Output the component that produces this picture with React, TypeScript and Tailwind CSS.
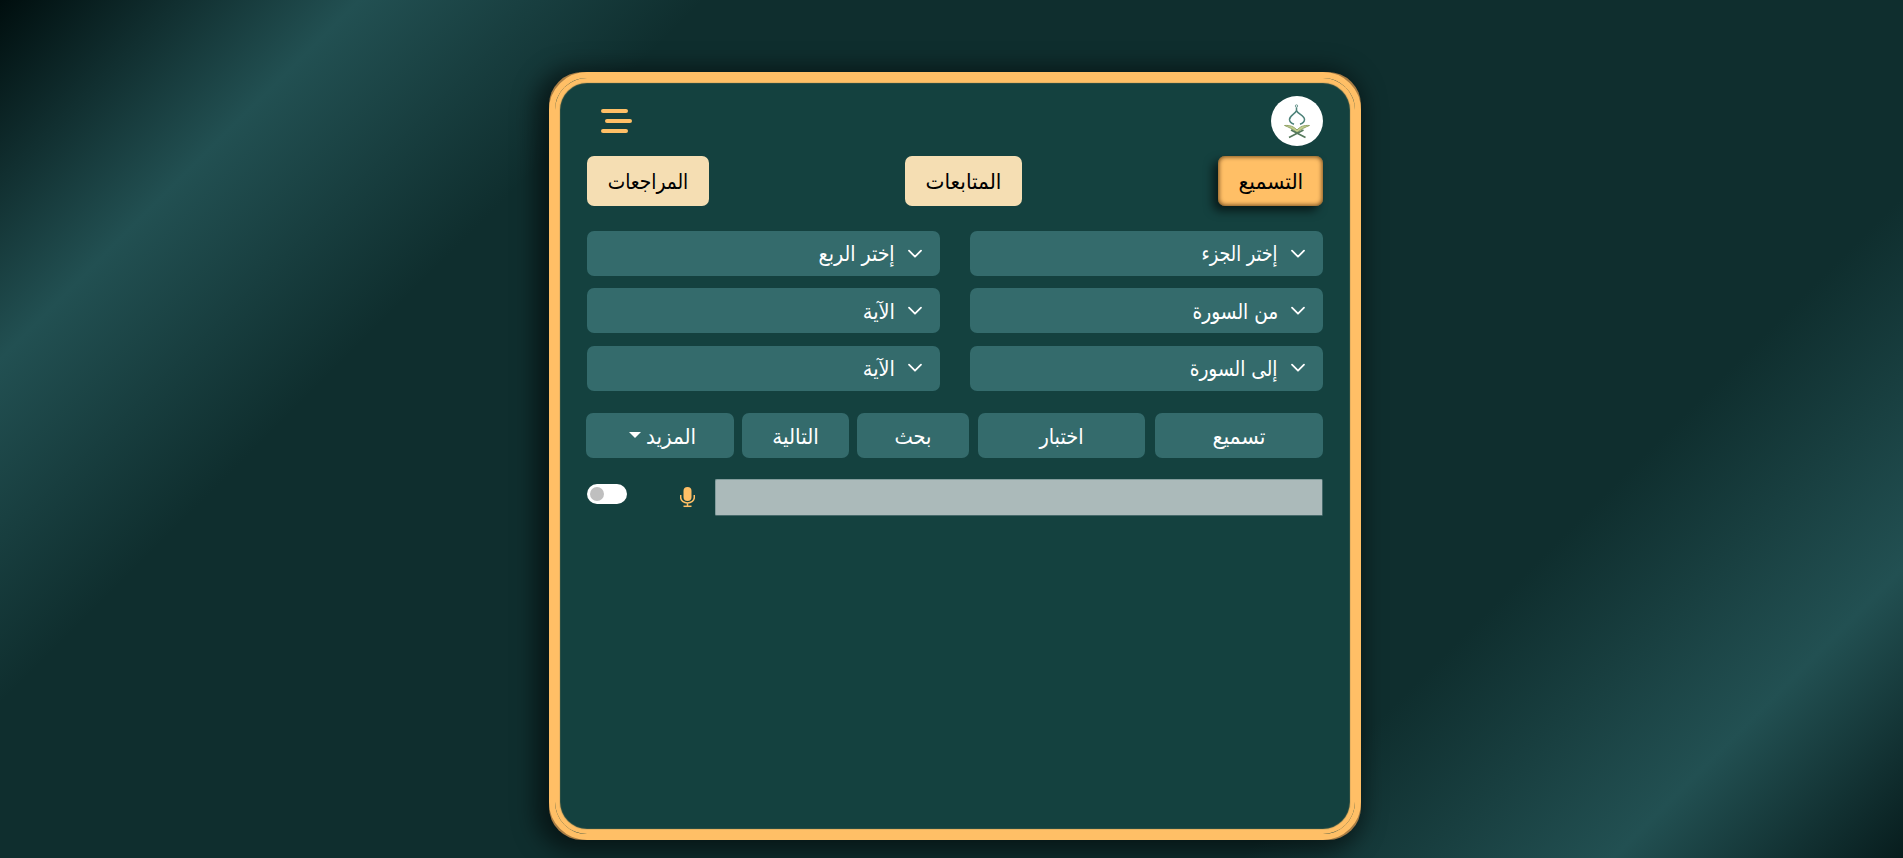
import React from "react";

function Chevron() {
  return (
    <svg width="16" height="16" viewBox="0 0 16 16" fill="none" stroke="#fff" strokeWidth="1.8" strokeLinecap="round" strokeLinejoin="round" className="shrink-0">
      <path d="m2 4.700 6 6 6-6" />
    </svg>
  );
}

function Select({ label, className = "" }: { label: string; className?: string }) {
  return (
    <div className="flex h-[45px] items-center gap-3 rounded-[7px] bg-[#346b6c] pr-[17px] text-white">
      <Chevron />
      <span className={"origin-right " + className}>{label}</span>
    </div>
  );
}

function Action({ className, children }: { className: string; children: React.ReactNode }) {
  return (
    <button className={"flex h-[45px] shrink-0 items-center justify-center rounded-[7px] bg-[#346b6c] pt-1 text-white " + className}>
      {children}
    </button>
  );
}

function Logo() {
  return (
    <div className="flex h-[50px] w-[52px] items-center justify-center rounded-[50%] bg-white">
      <svg width="52" height="50" viewBox="0 0 52 50" fill="none">
        <circle cx="25.500" cy="10" r="1.200" stroke="#6f9a92" strokeWidth="1" />
        <path d="M25.500 11.500v3c-1 3.500-7 5-7 9 0 2.300 1.500 3.700 4.500 4.800M25.500 14.500c1 3.500 8 5 8 9 0 2.300-1.500 3.700-4.500 4.800" stroke="#4d8279" strokeWidth="1.500" />
        <path d="M13.500 29.500c5-.5 9.500 1 12.500 4.500 3-3.500 7-5 12.500-4.500-4 1.500-8 3.500-12.500 7-4.500-3.500-8.500-5.500-12.500-7z" fill="#c3cf8d" stroke="#8a9c5e" strokeWidth=".9" />
        <path d="M18 41.500 32.500 34M34.500 41.500 20 34" stroke="#54785a" strokeWidth="1.600" />
      </svg>
    </div>
  );
}

export default function App() {
  return (
    <div dir="rtl" className="flex h-[858px] w-full justify-center overflow-hidden bg-[linear-gradient(135deg,#000e0e_0%,#225052_13%,#0f2e2e_25.5%,#0f2e2e_76%,#225052_89.5%,#000e0e_103%)] pt-[72px] font-['DejaVu_Sans_Condensed','DejaVu_Sans',sans-serif] text-[21.5px] leading-[30px] [font-stretch:condensed]">
      <div className="ml-[7px] h-[768px] w-[812px] rounded-[33px] bg-[#a97d45] shadow-[-6px_4px_22px_8px_rgba(0,0,0,0.5)]">
        <main className="h-full rounded-[38px] border-[6px] border-[#ffbf66] bg-[#14413f] px-8 pt-[18px] shadow-[inset_0_0_1px_5px_#ffbf66]">
          <header className="flex h-[50px] justify-between">
            <Logo />
            <div className="flex w-[45px] flex-col items-end gap-[6px] pt-[13px]" dir="ltr">
              <i className="mr-1 h-1 w-[27px] rounded-full bg-[#ffbf66]" />
              <i className="h-1 w-[27px] rounded-full bg-[#ffbf66]" />
              <i className="mr-1 h-1 w-[27px] rounded-full bg-[#ffbf66]" />
            </div>
          </header>
          <nav className="mt-[10px] flex h-[50px] justify-between text-black">
            <button className="w-[105px] rounded-[7px] bg-[#ffbf66] pt-0.5 shadow-[inset_0_0_4px_1px_rgba(60,30,0,0.7),-5px_5px_10px_rgba(0,0,0,0.6)]">
              <span className="inline-block scale-x-105">التسميع</span>
            </button>
            <button className="w-[117px] rounded-[7px] bg-[#f5deb3] pt-0.5">
              <span className="inline-block scale-x-[1.04]">المتابعات</span>
            </button>
            <button className="w-[122px] rounded-[7px] bg-[#f5deb3] pt-0.5">
              <span className="inline-block scale-x-[0.96]">المراجعات</span>
            </button>
          </nav>
          <section className="mt-[25px] grid grid-cols-2 gap-x-[30px] gap-y-[12.4px]">
            <Select label="إختر الجزء" className="scale-x-[0.91]" />
            <Select label="إختر الربع" className="scale-x-[0.98]" />
            <Select label="من السورة" className="scale-x-[0.96] pt-0.5" />
            <Select label="الآية" className="pt-0.5" />
            <Select label="إلى السورة" className="scale-x-[0.96] pt-0.5" />
            <Select label="الآية" className="pt-0.5" />
          </section>
          <section className="-ml-px mt-[22px] flex">
            <Action className="w-[168px]">
              <span className="scale-x-[1.06]">تسميع</span>
            </Action>
            <Action className="mr-[10px] w-[167px]">اختبار</Action>
            <Action className="mr-[9px] w-[112px]">بحث</Action>
            <Action className="mr-2 w-[107px]">
              <span className="scale-x-[1.03]">التالية</span>
            </Action>
            <Action className="mr-2 w-[148px] gap-[5px] pl-[3px]">
              <span className="origin-left scale-x-[1.03]">المزيد</span>
              <span className="mb-1 h-0 w-0 border-x-[6px] border-t-[6px] border-x-transparent border-t-white" />
            </Action>
          </section>
          <section className="mt-[21px] flex h-[37px]">
            <div className="w-[608px] rounded-[2px] border border-[#829c9c] border-r-[#46696a] border-b-[#46696a] bg-[#abbaba]" />
            <svg width="15" height="21" viewBox="0 0 15 21" className="mr-5 mt-2" fill="none">
              <rect x="3.500" y="0" width="8" height="14" rx="4" fill="#ffbf66" />
              <path d="M.7 8v2.500a6.800 5.500 0 0 0 13.600 0V8M7.500 16v4" stroke="#ffbf66" strokeWidth="1.500" />
              <path d="M3.500 19.300h8" stroke="#ffbf66" strokeWidth="1.500" />
            </svg>
            <div className="mr-auto mt-[5px] flex h-5 w-10 items-center justify-end rounded-full bg-white pl-[3px]">
              <span className="h-[14px] w-[14px] rounded-full bg-[#bfbfbf]" />
            </div>
          </section>
        </main>
      </div>
    </div>
  );
}
